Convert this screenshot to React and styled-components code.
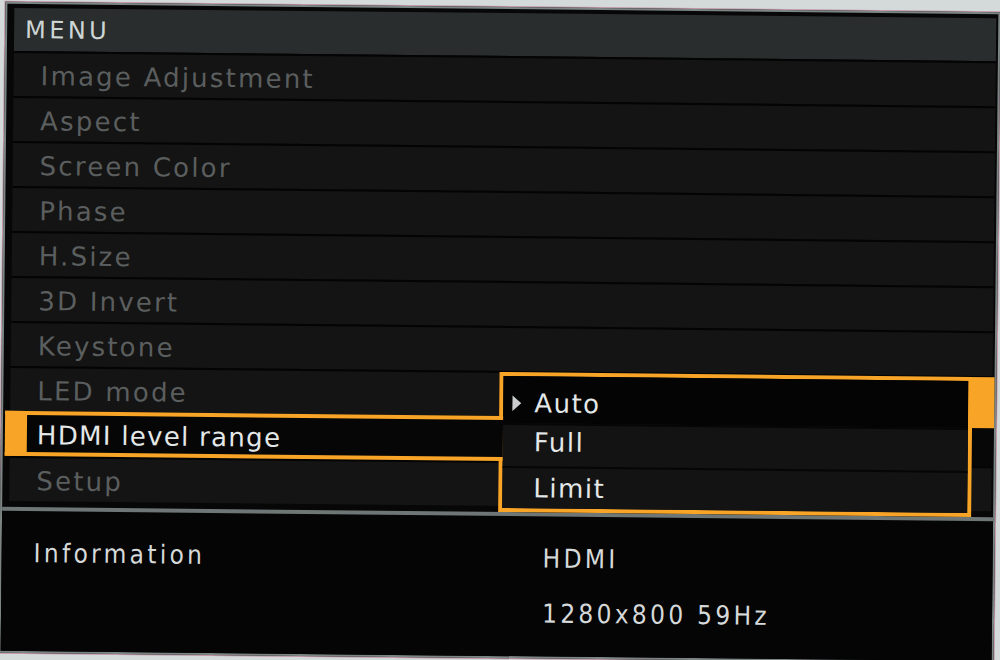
import React from 'react'
import styled, { createGlobalStyle } from 'styled-components'

const items = [
  'Image Adjustment',
  'Aspect',
  'Screen Color',
  'Phase',
  'H.Size',
  '3D Invert',
  'Keystone',
  'LED mode',
  'HDMI level range',
  'Setup',
]

const options = [
  { label: 'Auto', h: 47, pt: 7, pb: 0 },
  { label: 'Full', h: 43, pt: 0, pb: 8 },
  { label: 'Limit', h: 42, pt: 0, pb: 0 },
]

function App() {
  return (
    <>
      <GlobalStyle />
      <Screen>
        <Top>
          <Header>MENU</Header>
          <List>
            {items.map((name, i) => (
              <Row key={name} $selected={i === 8}>
                {name}
              </Row>
            ))}

            <Submenu>
              {options.map((o, i) => (
                <SubRow
                  key={o.label}
                  $first={i === 0}
                  $selected={i === 0}
                  $h={o.h}
                  $pt={o.pt}
                  $pb={o.pb}
                >
                  <Marker>
                    {i === 0 && (
                      <svg width="9" height="16" viewBox="0 0 9 16">
                        <polygon points="0,0 9,8 0,16" fill="#c9cdcd" />
                      </svg>
                    )}
                  </Marker>
                  {o.label}
                </SubRow>
              ))}
            </Submenu>
          </List>
        </Top>

        <Info>
          <span>Information</span>
          <span>HDMI</span>
          <span />
          <span>1280x800 59Hz</span>
        </Info>
      </Screen>
    </>
  )
}

export default App

const ORANGE = '#f8a427'

const GlobalStyle = createGlobalStyle`
  html, body {
    margin: 0;
    padding: 0;
    background: #d4d9d9;
    overflow: hidden;
  }
  body {
    width: 1000px;
    height: 660px;
    font-family: "DejaVu Sans", Verdana, sans-serif;
  }
`

const Screen = styled.div`
  box-sizing: border-box;
  width: 995px;
  margin: 7px 0 0 2px;
  border: 2px solid #7c8484;
  background: #070707;
  transform: rotate(0.6deg);
  box-shadow: 0 0 0 1px rgba(176, 96, 124, 0.55);
`

const Top = styled.div`
  padding: 4px 2px 6px 7px;
`

const Header = styled.div`
  height: 43px;
  display: flex;
  align-items: center;
  padding-left: 11px;
  background: #2a2d2d;
  color: #cdd5d5;
  font-size: 24px;
  letter-spacing: 3.4px;
`

const List = styled.div`
  position: relative;
`

const Row = styled.div`
  box-sizing: border-box;
  height: 45px;
  display: flex;
  align-items: center;
  padding: 3px 0 0 27px;
  border-top: 2px solid #040404;
  background: #141414;
  color: #5b5e5e;
  font-size: 26px;
  letter-spacing: 2.2px;
  white-space: nowrap;

  ${p => p.$selected && `
    position: relative;
    z-index: 3;
    width: 498px;
    margin-left: -5px;
    padding: 2px 0 0 10px;
    border: 4px solid ${ORANGE};
    border-left-width: 22px;
    border-right: none;
    background: #060606;
    color: #e3e7e7;
    letter-spacing: 1.3px;
  `}
`

const Submenu = styled.div`
  position: absolute;
  z-index: 2;
  top: 316px;
  left: 489px;
  width: 473px;
  height: 140px;
  box-sizing: border-box;
  display: flex;
  flex-direction: column;
  border: 4px solid ${ORANGE};
  background: #131313;
`

const SubRow = styled.div`
  position: relative;
  box-sizing: border-box;
  height: ${p => p.$h}px;
  display: flex;
  align-items: center;
  padding: ${p => p.$pt}px 0 ${p => p.$pb}px 9px;
  border-top: ${p => (p.$first ? 'none' : '2px solid #060606')};
  background: ${p => (p.$selected ? '#040404' : '#131313')};
  color: #e3e7e7;
  font-size: 26px;
  letter-spacing: 1.5px;

  &::after {
    content: '';
    display: ${p => (p.$selected ? 'block' : 'none')};
    position: absolute;
    top: -4px;
    bottom: 0;
    right: -26px;
    width: 26px;
    background: ${ORANGE};
  }
`

const Marker = styled.span`
  width: 22px;
  display: flex;
  align-items: center;
`

const Info = styled.div`
  display: grid;
  grid-template-columns: 509px 1fr;
  row-gap: 19px;
  padding: 24px 0 25px 32px;
  border-top: 4px solid #6e7676;
  background: #050505;
  color: #d5d9d9;
  font-family: "DejaVu Sans Condensed", "DejaVu Sans", sans-serif;
  font-stretch: condensed;
  font-size: 26px;
  line-height: 36px;
  letter-spacing: 3.3px;
`
